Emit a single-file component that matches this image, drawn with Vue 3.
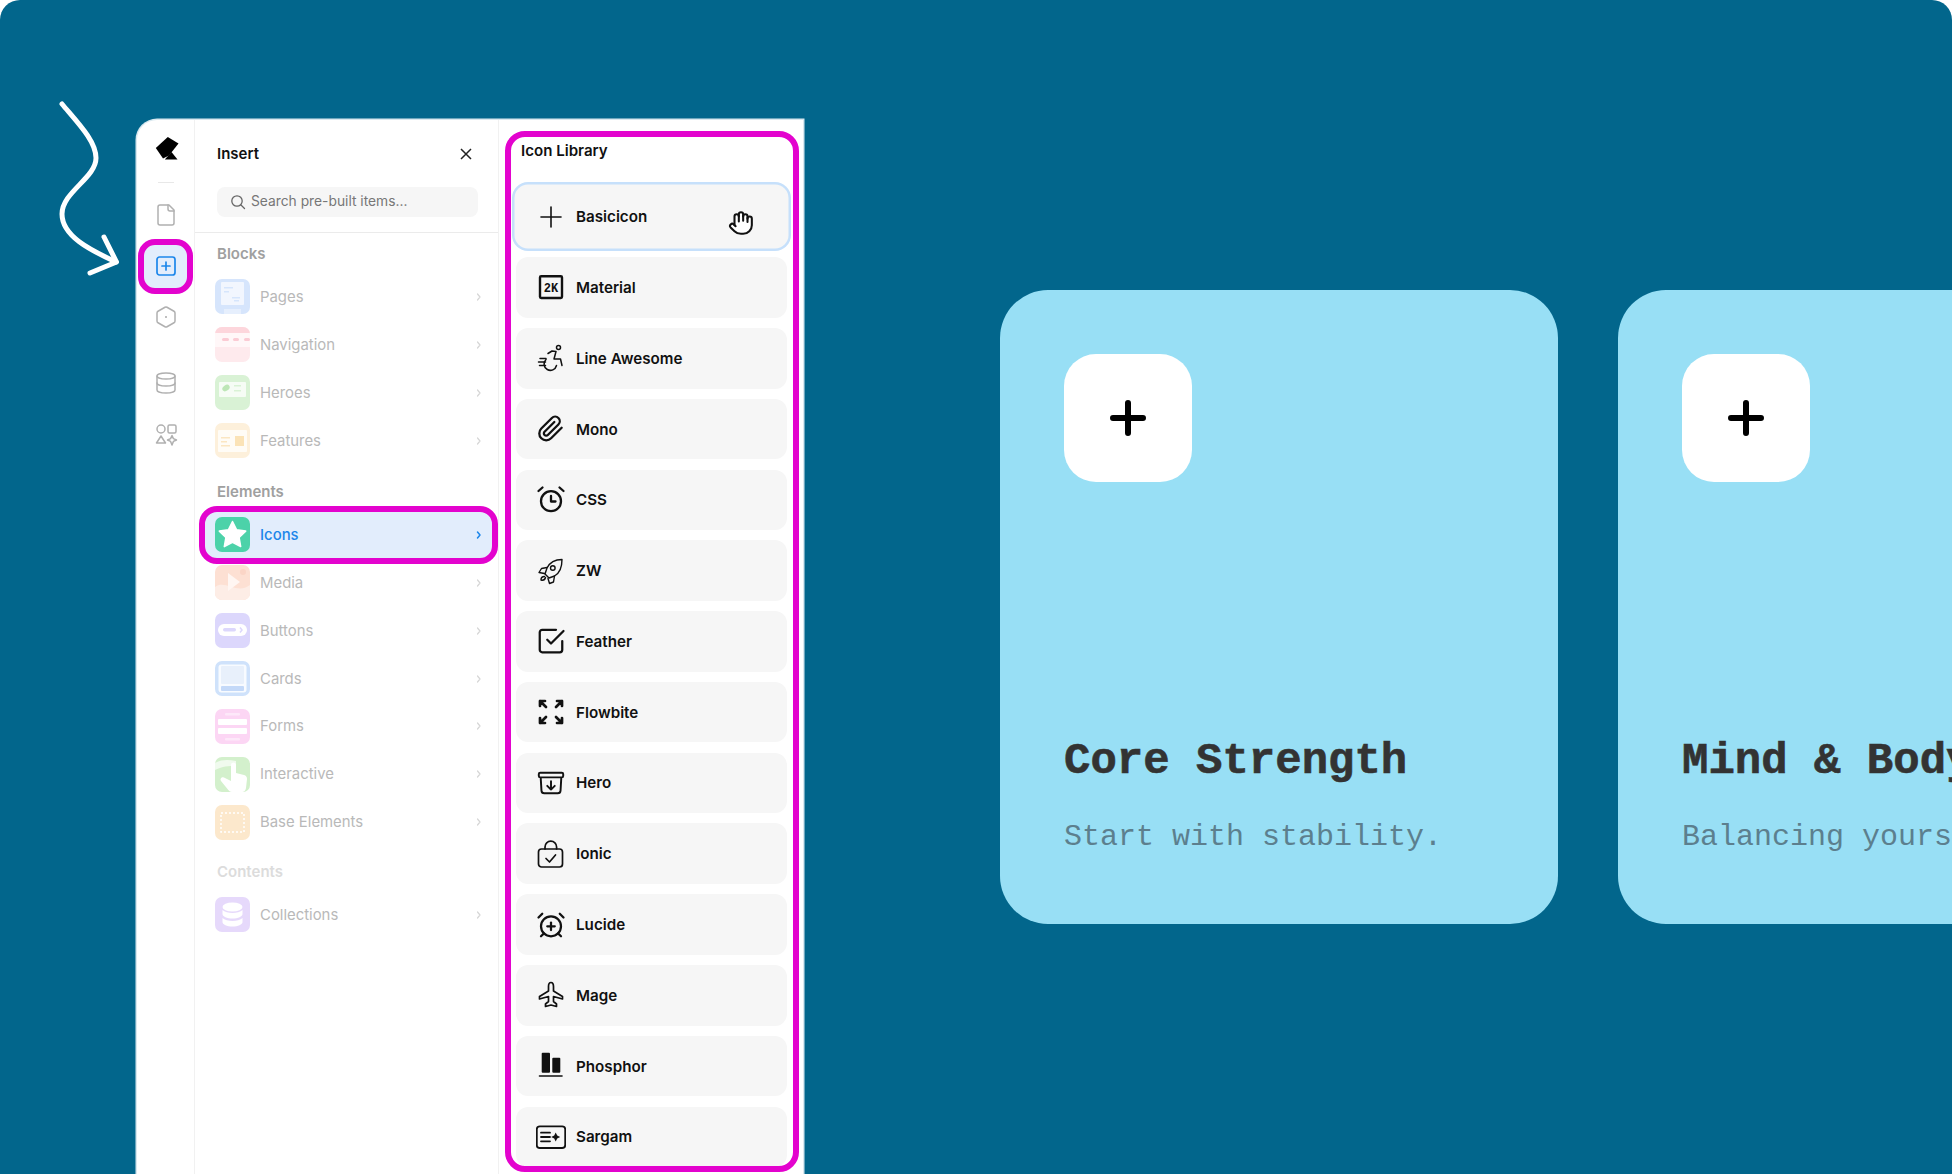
<script setup>
const p = (d, a = {}) => ({ t: 'path', a: { d, ...a } })
const c = (cx, cy, r, a = {}) => ({ t: 'circle', a: { cx, cy, r, ...a } })
const r = (x, y, width, height, rx, a = {}) => ({ t: 'rect', a: { x, y, width, height, rx, ...a } })
const M = { transform: 'translate(0 0) scale(1.25)', 'stroke-width': 1.8 }
const solid = { stroke: 'none', fill: '#111' }

const railTop = [
  { id: 'file', shapes: [p('M15 2H6a2 2 0 0 0-2 2v16a2 2 0 0 0 2 2h12a2 2 0 0 0 2-2V7Z'), p('M14 2v4a2 2 0 0 0 2 2h4')] },
  { id: 'add', active: true, shapes: [r(3, 3, 18, 18, 2.5), p('M8 12h8'), p('M12 8v8')] },
  { id: 'hex', shapes: [p('M21 16V8a2 2 0 0 0-1-1.73l-7-4a2 2 0 0 0-2 0l-7 4A2 2 0 0 0 3 8v8a2 2 0 0 0 1 1.73l7 4a2 2 0 0 0 2 0l7-4A2 2 0 0 0 21 16z'), c(12, 12, 1, { fill: '#aaa', stroke: 'none' })] }
]
const railBottom = [
  { id: 'db', shapes: [{ t: 'ellipse', a: { cx: 12, cy: 5, rx: 9, ry: 3 } }, p('M3 5V19A9 3 0 0 0 21 19V5'), p('M3 12A9 3 0 0 0 21 12')] },
  { id: 'shapes', shapes: [c(7, 7, 4), r(14, 3, 8, 8, 1.5), p('M7 14l4.5 7h-9z'), p('M18 13.5l1.4 3.1 3.1 1.4-3.1 1.4L18 23l-1.400-3.600-3.100-1.400 3.100-1.400z')] }
]

const W = { fill: '#fff', stroke: 'none' }
const thumbs = {
  Pages: { bg: '#d6e5fc', s: [r(6, 3, 23, 23, 1, { fill: '#f2f6fe' }), r(9, 8, 9, 1.5, 0, { fill: '#d6e5fc' }), r(9, 12, 5, 1.5, 0, { fill: '#d6e5fc' }), r(17, 18, 8, 1.5, 0, { fill: '#d6e5fc' }), r(19, 21, 5, 1.5, 0, { fill: '#d6e5fc' }), r(9, 30, 17, 5, 0, { fill: '#e6effd' })] },
  Navigation: { bg: '#feeaed', s: [r(0, 0, 35, 6, 0, { fill: '#fdd6dc' }), r(0, 6, 35, 14, 0, { fill: '#fff7f8' }), r(7, 11, 7, 3, 1.5, { fill: '#fbcbd4' }), r(18, 11, 6, 3, 1.5, { fill: '#fbcbd4' }), r(29, 11, 6, 3, 1.5, { fill: '#fbcbd4' })] },
  Heroes: { bg: '#d9f2d5', s: [r(4, 7, 27, 15, 1, { fill: '#f6fcf5' }), { t: 'ellipse', a: { cx: 11, cy: 13, rx: 4, ry: 2.800, fill: '#bde6b6', transform: 'rotate(-35 11 13)' } }, r(19, 10, 7, 1.5, 0, { fill: '#d9f2d5' }), r(19, 15, 7, 1.5, 0, { fill: '#d9f2d5' })] },
  Features: { bg: '#fdf0db', s: [r(3, 7, 29, 22, 1, { fill: '#fffcf6' }), r(20, 13, 9, 10, 0, { fill: '#fbe3b7' }), r(6, 14, 9, 1.500, 0, { fill: '#fbe6c2' }), r(6, 18, 6, 1.500, 0, { fill: '#fbe6c2' }), r(6, 22, 9, 1.500, 0, { fill: '#fbe6c2' })] },
  Icons: { bg: '#4cd2a9', s: [p('M17.5 4.500l4.100 8.300 9.100 1.300-6.600 6.400 1.600 9.100-8.200-4.300-8.200 4.300 1.600-9.100-6.600-6.400 9.100-1.300z', { fill: '#fff', stroke: '#fff', 'stroke-width': 1.500, 'stroke-linejoin': 'round' })] },
  Media: { bg: '#fde0d3', s: [p('M0 22C10 14 22 30 35 20V35H0z', { fill: '#fdede6' }), p('M13 8l12 9-12 9z', { fill: '#fff6f2' }), c(28, 7, 3, { fill: '#fbd5c6' })] },
  Buttons: { bg: '#dcd7fc', s: [r(3, 11, 29, 12, 6, W), r(8, 15, 13, 3.500, 1.700, { fill: '#dcd7fc' }), p('M25 14.500l2 2.500-2 2.500', { fill: 'none', stroke: '#dcd7fc', 'stroke-width': 1.500 })] },
  Cards: { bg: '#cfe2fb', s: [r(3.500, 3.500, 28, 28, 3, { fill: '#f8fbff' }), r(6, 5, 23, 18, 1, { fill: '#e8f0fb' }), r(6, 25, 23, 5, 1, { fill: '#c4d9f8' })] },
  Forms: { bg: '#fcd6f4', s: [r(3, 10, 29, 6, 1, W), r(3, 19, 29, 6, 1, W), r(10, 4, 15, 2.500, 1, { fill: '#fde8f9' }), r(10, 29, 15, 2.500, 1, { fill: '#fde8f9' })] },
  Interactive: { bg: '#d3f0cc', s: [p('M0 6C8 2 14 3 21 4v5C13 9 8 9 0 13z', { fill: '#f0faee' }), p('M16 8a2.500 2.500 0 0 1 5 0v8l8 2c2 .500 3 2 3 4l-1 9c-.300 2-1.500 4-4 4H17c-2 0-3-1-4.500-3L6 24c-1.500-2 1-5 4-3l6 3z', W)] },
  'Base Elements': { bg: '#fce8cc', s: [r(6, 8, 23, 19, 0, { fill: 'none', stroke: '#fff', 'stroke-width': 1.500, 'stroke-dasharray': '2 2' })] },
  Collections: { bg: '#e6d9fb', s: [{ t: 'ellipse', a: { cx: 17.500, cy: 10, rx: 10, ry: 4.500, fill: '#fff' } }, p('M7.500 13v4c0 2.500 4.500 4.500 10 4.500s10-2 10-4.500v-4c-2 2-6 3-10 3s-8-1-10-3z', W), p('M7.500 21v4c0 2.500 4.500 4.500 10 4.500s10-2 10-4.500v-4c-2 2-6 3-10 3s-8-1-10-3z', W)] }
}
const groups = [
  { title: 'Blocks', items: ['Pages', 'Navigation', 'Heroes', 'Features'] },
  { title: 'Elements', items: ['Icons', 'Media', 'Buttons', 'Cards', 'Forms', 'Interactive', 'Base Elements'] },
  { title: 'Contents', faint: true, items: ['Collections'] }
]

const libs = [
  { name: 'Basicicon', sw: 1.6, s: [p('M5 15h20'), p('M15 5v20')] },
  { name: 'Material', sw: 2.4, s: [r(4, 4.300, 22, 21.700, 1.200)], label: '2K' },
  { name: 'Line Awesome', sw: 1.5, s: [c(22.500, 4.500, 2), p('M10 16.500a6.300 6.300 0 1 0 10.500 6'), p('M12 10.500l4-2.500 4 .500-2 7.500h6.500l1.500 6.500'), p('M4 15.500h6M2.500 19h7M3.500 22.500h6')] },
  { name: 'Mono', sw: 2, s: [p('M21.440 11.050l-9.190 9.190a6 6 0 0 1-8.490-8.490l9.190-9.190a4 4 0 0 1 5.660 5.660l-9.200 9.190a2 2 0 0 1-2.830-2.830l8.490-8.480', { transform: 'translate(1 1) scale(1.150)', 'stroke-width': 2 })] },
  { name: 'CSS', sw: 2.3, s: [c(15, 16.200, 10), p('M15 11v5.500h4.500'), p('M2.500 6l4-3.500'), p('M23.500 2.500l4 3.500')] },
  { name: 'ZW', sw: 1.4, s: [p('M26 3.500C20 3.500 14 6 11 12L9 18l4 4 5.500-2C24 17 26 10 26 3.500z'), c(16.800, 12, 2.300), p('M11 11.500l-5.500 1-2.500 4 5.500 1'), p('M18.500 20l-1 6-4 1.500-1.500-5'), p('M8.500 20.500c-2 0-3.500 1.500-3.500 3.500 2 .500 4-.500 4.500-2.500')] },
  { name: 'Feather', sw: 2, s: [p('M9 11l3 3L22 4', M), p('M21 12v7a2 2 0 0 1-2 2H5a2 2 0 0 1-2-2V5a2 2 0 0 1 2-2h11', M)] },
  { name: 'Flowbite', sw: 2.700, s: [p('M4 9V4h5M4 4l6 6'), p('M26 9V4h-5M26 4l-6 6'), p('M4 21v5h5M4 26l6-6'), p('M26 21v5h-5M26 26l-6-6')] },
  { name: 'Hero', sw: 1.800, s: [p('M20.250 7.500l-.625 10.632a2.250 2.250 0 0 1-2.247 2.118H6.622a2.250 2.250 0 0 1-2.247-2.118L3.750 7.500m8.250 3v6.750m0 0l-3-3m3 3l3-3M3.375 7.500h17.250c.621 0 1.125-.504 1.125-1.125v-1.500c0-.621-.504-1.125-1.125-1.125H3.375c-.621 0-1.125.504-1.125 1.125v1.500c0 .621.504 1.125 1.125 1.125z', { transform: 'translate(0 0) scale(1.250)', 'stroke-width': 1.550 })] },
  { name: 'Ionic', sw: 1.700, s: [r(2.500, 10, 24, 18, 3), p('M9 10V8a5.800 5.800 0 0 1 11.600 0v2'), p('M10 19.500l3.500 3.500 6-7')] },
  { name: 'Lucide', sw: 2, s: [c(12, 13, 8, M), p('M5 3 2 6', M), p('M22 6l-3-3', M), p('M6.380 18.700 4 21', M), p('M17.640 18.670 20 21', M), p('M12 10v6', M), p('M9 13h6', M)] },
  { name: 'Mage', sw: 1.700, s: [p('M15 2.500c-1.500 0-2.500 1.500-2.500 4V11L3.500 16.500V19l9-2.500v5l-3 2.500v2.500l5.500-1.500 5.500 1.500V24l-3-2.500v-5l9 2.500v-2.500L17.500 11V6.500c0-2.500-1-4-2.500-4z')] },
  { name: 'Phosphor', sw: 1.600, s: [r(5.700, 1.700, 8.300, 20, 1, solid), r(16.300, 6.700, 8, 15, 1, solid), p('M3.500 25h22.500')] },
  { name: 'Sargam', sw: 1.800, s: [r(.800, 4.300, 28.400, 21.700, 3), p('M5 10.700h9M5 15h9M5 19.300h9'), p('M19.700 10.500l1.500 3 3 1.500-3 1.500-1.500 3-1.500-3-3-1.500 3-1.500z', { fill: '#111', stroke: 'none' })] }
]

const cards = [
  { title: 'Core Strength', text: 'Start with stability.' },
  { title: 'Mind & Body', text: 'Balancing yourself for the day.' }
]
</script>

<template>
  <main class="stage">
    <svg class="arrow" width="130" height="190" viewBox="50 95 130 190">
      <path d="M62 104C78 123 96 141 96 158C96 178 62 192 62 214C62 236 90 250 116 262" />
      <path d="M104 237L116.500 262L90 273" />
    </svg>

    <section class="panel">
      <nav class="rail">
        <svg class="logo" width="28" height="28" viewBox="0 0 28 28">
          <path d="M15.800 3L26.500 9.500 17 21.500 11 24.500 3.800 14z" fill="#000" />
          <path d="M12.800 25.500L19.500 18 25.500 25.500z" fill="#000" />
        </svg>
        <span class="rail-line"></span>
        <div class="rail-set">
          <span v-for="i in railTop" :key="i.id" class="tile" :class="{ on: i.active }">
            <svg class="ic" width="24" height="24" viewBox="0 0 24 24">
              <component :is="s.t" v-for="(s, k) in i.shapes" :key="k" v-bind="s.a" />
            </svg>
          </span>
        </div>
        <div class="rail-set lower">
          <span v-for="i in railBottom" :key="i.id" class="tile">
            <svg class="ic" width="24" height="24" viewBox="0 0 24 24">
              <component :is="s.t" v-for="(s, k) in i.shapes" :key="k" v-bind="s.a" />
            </svg>
          </span>
        </div>
      </nav>

      <div class="insert">
        <header class="ins-head">
          <div class="ins-top">
            <h2>Insert</h2>
            <svg class="close" width="16" height="16" viewBox="0 0 16 16"><path d="M3 3l10 10M13 3L3 13" /></svg>
          </div>
          <div class="search">
            <svg class="mag" width="16" height="16" viewBox="0 0 16 16"><circle cx="7" cy="7" r="5.200" /><path d="M11 11l3.500 3.500" /></svg>
            <span>Search pre-built items...</span>
          </div>
        </header>
        <div v-for="g in groups" :key="g.title" class="group" :class="{ last: g.faint }">
          <h3 :class="{ faint: g.faint }">{{ g.title }}</h3>
          <div v-for="item in g.items" :key="item" class="row" :class="{ sel: item === 'Icons' }">
            <svg class="thumb" width="35" height="35" viewBox="0 0 35 35">
              <rect width="35" height="35" :fill="thumbs[item].bg" />
              <component :is="s.t" v-for="(s, k) in thumbs[item].s" :key="k" v-bind="s.a" />
            </svg>
            <span class="row-name">{{ item }}</span>
            <svg class="chev" width="8" height="10" viewBox="0 0 8 10"><path d="M2.500 2l2.500 3-2.500 3" /></svg>
          </div>
        </div>
      </div>

      <div class="library">
        <h2>Icon Library</h2>
        <div class="lib-list">
          <div v-for="(l, n) in libs" :key="l.name" class="lib" :class="{ hover: n === 0 }">
            <svg class="lib-ic" width="30" height="30" viewBox="0 0 30 30" :stroke-width="l.sw">
              <component :is="s.t" v-for="(s, k) in l.s" :key="k" v-bind="s.a" />
              <text v-if="l.label" x="15" y="19.500" class="lib-label">{{ l.label }}</text>
            </svg>
            <span>{{ l.name }}</span>
            <svg v-if="n === 0" class="hand" width="26" height="26" viewBox="0 0 24 24">
              <path class="hand-fill" d="M18 11V6a2 2 0 0 0-4 0V4a2 2 0 0 0-4 0v2a2 2 0 0 0-4 0v8l-1-1.200a2 2 0 0 0-2.800 2.800l3.600 3.600C7.500 21.100 9.200 22 12 22h2a8 8 0 0 0 8-8V8a2 2 0 0 0-4 0z" />
              <path d="M18 11V6a2 2 0 0 0-2-2a2 2 0 0 0-2 2" />
              <path d="M14 10V4a2 2 0 0 0-2-2a2 2 0 0 0-2 2v2" />
              <path d="M10 10.500V6a2 2 0 0 0-2-2a2 2 0 0 0-2 2v8" />
              <path d="M18 8a2 2 0 1 1 4 0v6a8 8 0 0 1-8 8h-2c-2.800 0-4.500-.860-5.990-2.340l-3.600-3.600a2 2 0 0 1 2.830-2.820L7 15" />
            </svg>
          </div>
        </div>
        <span class="lib-frame"></span>
      </div>
    </section>

    <section class="cards">
      <article v-for="card in cards" :key="card.title" class="card">
        <div class="plus-box">
          <svg width="36" height="36" viewBox="0 0 36 36"><path d="M18 3v30M3 18h30" /></svg>
        </div>
        <h1>{{ card.title }}</h1>
        <p>{{ card.text }}</p>
      </article>
    </section>
  </main>
</template>

<style>
html, body { margin: 0; background: #fff; }
</style>

<style scoped>
.stage {
  position: relative;
  display: flex;
  align-items: flex-start;
  width: 1952px;
  height: 1174px;
  padding-left: 137px;
  box-sizing: border-box;
  overflow: hidden;
  background: #02668c;
  border-radius: 20px 20px 0 0;
  font-family: Inter, "Liberation Sans", sans-serif;
}
.arrow { position: absolute; left: 50px; top: 95px; fill: none; stroke: #fff; stroke-width: 5; stroke-linecap: round; stroke-linejoin: round; }

.panel {
  display: flex;
  flex: none;
  width: 666px;
  height: 1054px;
  margin-top: 120px;
  box-sizing: border-box;
  background: #fff;
  border-radius: 20px 0 0 0;
  box-shadow: 0 0 0 1.500px #d9e8ef;
  overflow: hidden;
}

.rail {
  flex: none;
  width: 58px;
  box-sizing: border-box;
  border-right: 1px solid #f1f1f1;
  display: flex;
  flex-direction: column;
  align-items: center;
  padding-top: 14px;
}
.logo { display: block; }
.rail-line { width: 16px; height: 1px; background: #e8e8e8; margin-top: 20px; }
.rail-set { display: flex; flex-direction: column; gap: 7px; margin-top: 10px; }
.rail-set.lower { margin-top: 22px; }
.tile { position: relative; display: flex; align-items: center; justify-content: center; width: 44px; height: 44px; color: #b0b0b0; }
.tile.on { color: #1c86ea; background: #e2edfc; border-radius: 10px; }
.tile.on::after { content: ""; position: absolute; inset: -5.500px; border: 6px solid #e303ce; border-radius: 17px; }
.ic { fill: none; stroke: currentColor; stroke-width: 1.500; stroke-linecap: round; stroke-linejoin: round; }
.tile.on .ic { stroke-width: 1.700; }

.insert { flex: none; width: 304px; box-sizing: border-box; border-right: 1px solid #f1f1f1; }
.ins-head { height: 113px; box-sizing: border-box; padding: 0 20px 0 22px; border-bottom: 1px solid #ebebeb; }
.ins-top { display: flex; justify-content: space-between; align-items: center; height: 67px; }
h2 { margin: 0; font-size: 15px; font-weight: 600; color: #111; }
.close { fill: none; stroke: #222; stroke-width: 1.500; margin-right: 4px; }
.search { display: flex; align-items: center; gap: 6px; height: 30px; padding-left: 13px; background: #f6f6f6; border-radius: 8px; font-size: 13.800px; color: #777; }
.search span { margin-top: -2px; margin-left: -1px; }
.mag { fill: none; stroke: #666; stroke-width: 1.300; stroke-linecap: round; }
.group { padding-top: 8px; }
.group:first-of-type { padding-top: 2px; }
.group.last { padding-top: 6.500px; }
h3 { margin: 0; padding-left: 22px; height: 38px; line-height: 38px; font-size: 15px; font-weight: 600; color: #a0a0a0; }
h3.faint { color: #dcdcdc; }
.row { position: relative; display: flex; align-items: center; height: 47.950px; margin: 0 6px 0 10px; padding: 0 9px 0 10px; }
.thumb { flex: none; border-radius: 7px; }
.row-name { flex: 1; margin-left: 10px; font-size: 14.900px; color: #b9b9b9; }
.chev { fill: none; stroke: #d6d6d6; stroke-width: 1.200; stroke-linecap: round; stroke-linejoin: round; }
.row.sel { background: #e2edfc; border-radius: 12px; z-index: 1; }
.row.sel::after { content: ""; position: absolute; inset: -5px -6px; border: 6px solid #e303ce; border-radius: 18px; }
.row.sel .row-name { color: #1c86ea; font-weight: 500; }
.row.sel .chev { stroke: #1c86ea; stroke-width: 1.500; }

.library { position: relative; flex: 1; padding: 0 16px 0 17px; }
.library h2 { height: 66.400px; line-height: 62px; padding-left: 5px; font-size: 15.100px; box-sizing: border-box; }
.lib-list { display: flex; flex-direction: column; gap: 10.200px; }
.lib { position: relative; display: flex; align-items: center; height: 60.600px; flex: none; padding-left: 20px; background: #f6f6f6; border-radius: 12px; font-size: 15.200px; font-weight: 600; color: #111; }
.lib.hover { box-shadow: 0 0 0 1.500px #f6f6f6, 0 0 0 4px #c6e0fb; }
.lib-ic { flex: none; margin-right: 10px; fill: none; stroke: #111; stroke-linecap: round; stroke-linejoin: round; }
.lib-label { font-family: "Liberation Mono", monospace; font-size: 12px; font-weight: 700; fill: #111; stroke: none; text-anchor: middle; }
.hand { position: absolute; left: 212px; top: 24px; fill: none; stroke: #111; stroke-width: 1.900; stroke-linecap: round; stroke-linejoin: round; }
.hand-fill { fill: #fff; stroke: none; }
.lib-frame { position: absolute; left: 6px; top: 11px; width: 294px; height: 1041px; box-sizing: border-box; border: 6px solid #e303ce; border-radius: 20px; z-index: 2; }

.cards { display: flex; flex: none; gap: 60px; margin: 290px 0 0 197px; }
.card {
  flex: none;
  display: flex;
  flex-direction: column;
  width: 558px;
  height: 634px;
  box-sizing: border-box;
  padding: 64px 64px 0;
  background: #98dff5;
  border-radius: 48px;
  font-family: "Liberation Mono", monospace;
  white-space: nowrap;
}
.plus-box { display: flex; align-items: center; justify-content: center; width: 128px; height: 128px; background: #fff; border-radius: 32px; }
.plus-box svg { fill: none; stroke: #000; stroke-width: 6; stroke-linecap: round; }
.card h1 { margin: 251px 0 0; font-size: 44px; line-height: 56px; font-weight: 700; color: #333; -webkit-text-stroke: .6px #333; }
.card p { margin: 27.500px 0 0; font-size: 30px; line-height: 40px; color: #5c7f8e; }
</style>
